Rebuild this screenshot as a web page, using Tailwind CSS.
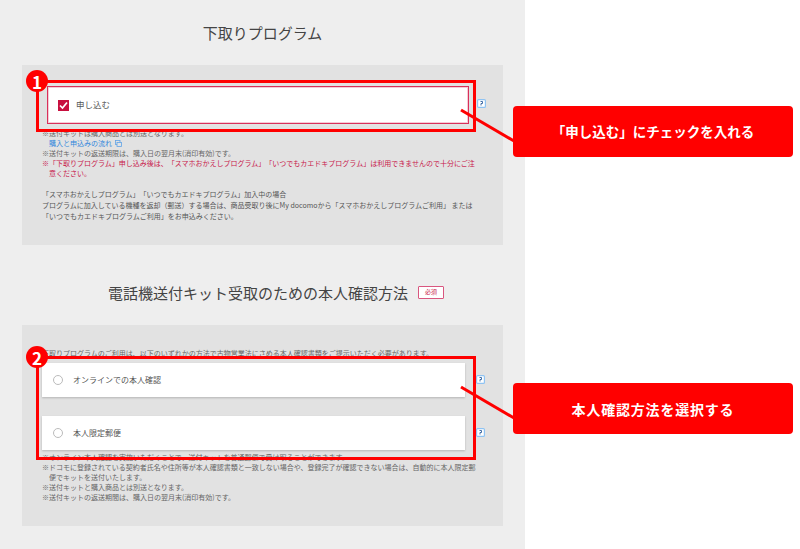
<!DOCTYPE html>
<html lang="ja">
<head>
<meta charset="utf-8">
<script src="https://cdn.jsdelivr.net/npm/@tailwindcss/browser@4"></script>
</head>
<body class="bg-white">
<div class="relative w-[800px] h-[549px] overflow-hidden bg-white font-['Noto_Sans_CJK_JP','Noto_Sans',sans-serif] text-[#666] [text-spacing-trim:space-all]">
  <main class="w-[525px] h-full bg-[#eeeeee] px-[22px]">
    <section>
      <h2 class="h-[65px] flex items-center justify-center text-[15px] leading-none font-normal text-[#444]">下取りプログラム</h2>
      <div class="h-[180px] bg-[#e2e2e2] pl-[20px] pt-[21px]">
        <div class="flex items-center">
          <label class="ml-[5px] w-[422px] h-[38px] bg-white border border-[#d9305a] shadow-[inset_0_0_0_1px_rgba(217,48,90,0.25)] flex items-center pl-[10px]">
            <span class="w-[11px] h-[11px] bg-[#c8103f] flex items-center justify-center">
              <svg width="9" height="9" viewBox="0 0 9 9" fill="none" stroke="#fff" stroke-width="1.7"><path d="M1 4.5 L3.5 7 L8 1.5"/></svg>
            </span>
            <span class="ml-[7px] -mt-[2px] text-[8.5px] leading-none text-[#555]">申し込む</span>
          </label>
          <svg class="ml-[8px] -mt-[4px]" width="9" height="9" viewBox="0 0 9 9"><rect x="0.600" y="0.600" width="7.800" height="7.800" rx="1" fill="#fff" stroke="#8fc3f2" stroke-width="1.200"/><path d="M3.500 2.500h2v2h-1.500v2" fill="none" stroke="#2c5f9e" stroke-width="0.900"/></svg>
        </div>
        <div class="mt-[4px] text-[7px] leading-[10px] w-[436px]">
          <p>※送付キットは購入商品とは別送となります。</p>
          <p class="pl-[7px] text-[#2f86dc] flex items-center gap-[3px]">購入と申込みの流れ
            <svg width="7" height="7" viewBox="0 0 7 7" fill="none" stroke="#5fa3e6" stroke-width="0.800"><rect x="0.500" y="0.500" width="4.500" height="4"/><rect x="2" y="2.500" width="4.500" height="4" fill="#e2e2e2"/></svg>
          </p>
          <p>※送付キットの返送期限は、購入日の翌月末(消印有効)です。</p>
          <p class="pl-[7px] -indent-[7px] text-[#c8174a]">※「下取りプログラム」申し込み後は、「スマホおかえしプログラム」「いつでもカエドキプログラム」は利用できませんので十分にご注意ください。</p>
        </div>
        <div class="mt-[11px] text-[7px] leading-[11px] w-[436px] text-[#555]">
          <p>「スマホおかえしプログラム」「いつでもカエドキプログラム」加入中の場合</p>
          <p>プログラムに加入している機種を返却（郵送）する場合は、商品受取り後にMy docomoから「スマホおかえしプログラムご利用」 または「いつでもカエドキプログラムご利用」をお申込みください。</p>
        </div>
      </div>
    </section>
    <section>
      <div class="h-[80px] pt-[14px] pl-[27px] flex items-center justify-center">
        <h2 class="text-[15px] leading-none font-normal text-[#444]">電話機送付キット受取のための本人確認方法</h2>
        <span class="ml-[10px] w-[26px] h-[13px] bg-white border border-[#d9567f] rounded-[1px] flex items-center justify-center text-[6px] leading-none text-[#c8174a]">必須</span>
      </div>
      <div class="h-[201px] bg-[#e2e2e2] pl-[20px] pt-[23px]">
        <p class="text-[7px] leading-[10px]">下取りプログラムのご利用は、以下のいずれかの方法で古物営業法にさめる本人確認書類をご提示いただく必要があります。</p>
        <div class="mt-[5px] flex items-center">
          <label class="w-[423px] h-[34px] bg-white shadow-[0_1px_2px_rgba(0,0,0,0.2)] flex items-center pl-[11px]">
            <span class="w-[10px] h-[10px] rounded-full border border-[#bbb] bg-white"></span>
            <span class="ml-[10px] text-[8px] leading-none text-[#555]">オンラインでの本人確認</span>
          </label>
          <svg class="ml-[11px] -mt-[2px]" width="9" height="9" viewBox="0 0 9 9"><rect x="0.600" y="0.600" width="7.800" height="7.800" rx="1" fill="#fff" stroke="#8fc3f2" stroke-width="1.200"/><path d="M3.500 2.500h2v2h-1.500v2" fill="none" stroke="#2c5f9e" stroke-width="0.900"/></svg>
        </div>
        <div class="mt-[19px] flex items-center">
          <label class="w-[423px] h-[34px] bg-white shadow-[0_1px_2px_rgba(0,0,0,0.2)] flex items-center pl-[11px]">
            <span class="w-[10px] h-[10px] rounded-full border border-[#bbb] bg-white"></span>
            <span class="ml-[10px] text-[8px] leading-none text-[#555]">本人限定郵便</span>
          </label>
          <svg class="ml-[11px] -mt-[2px]" width="9" height="9" viewBox="0 0 9 9"><rect x="0.600" y="0.600" width="7.800" height="7.800" rx="1" fill="#fff" stroke="#8fc3f2" stroke-width="1.200"/><path d="M3.500 2.500h2v2h-1.500v2" fill="none" stroke="#2c5f9e" stroke-width="0.900"/></svg>
        </div>
        <div class="mt-[2px] text-[7px] leading-[10px] w-[436px]">
          <p>※オンライン本人確認を実施いただくことで、送付キットを普通郵便で受け取ることができます。</p>
          <p class="pl-[7px] -indent-[7px]">※ドコモに登録されている契約者氏名や住所等が本人確認書類と一致しない場合や、登録完了が確認できない場合は、自動的に本人限定郵便でキットを送付いたします。</p>
          <p>※送付キットと購入商品とは別送となります。</p>
          <p>※送付キットの返送期間は、購入日の翌月末(消印有効)です。</p>
        </div>
      </div>
    </section>
  </main>

  <!-- annotations laid over the screenshot -->
  <svg class="absolute left-0 top-0 pointer-events-none" width="800" height="549" fill="none" stroke="#ff0000" stroke-width="3">
    <path d="M461 110 L514 141"/>
    <path d="M461 387 L514 418"/>
  </svg>
  <div class="absolute left-[36px] top-[80px] w-[440px] h-[52px] border-[3px] border-[#ff0000]"></div>
  <div class="absolute left-[36px] top-[356px] w-[440px] h-[104px] border-[3px] border-[#ff0000]"></div>
  <div class="absolute left-[26px] top-[70px] w-[22px] h-[22px] rounded-full bg-[#ff0000] text-white font-bold text-[17px] leading-none flex items-center justify-center">1</div>
  <div class="absolute left-[26px] top-[346px] w-[22px] h-[22px] rounded-full bg-[#ff0000] text-white font-bold text-[17px] leading-none flex items-center justify-center">2</div>
  <div class="absolute left-[513px] top-[106px] w-[280px] h-[51px] rounded-[4px] bg-[#ff0000] text-white font-bold text-[13.5px] leading-none flex items-center justify-center">「申し込む」にチェックを入れる</div>
  <div class="absolute left-[513px] top-[383px] w-[280px] h-[51px] rounded-[4px] bg-[#ff0000] text-white font-bold text-[14px] tracking-[0.800px] leading-none flex items-center justify-center">本人確認方法を選択する</div>
</div>
</body>
</html>
